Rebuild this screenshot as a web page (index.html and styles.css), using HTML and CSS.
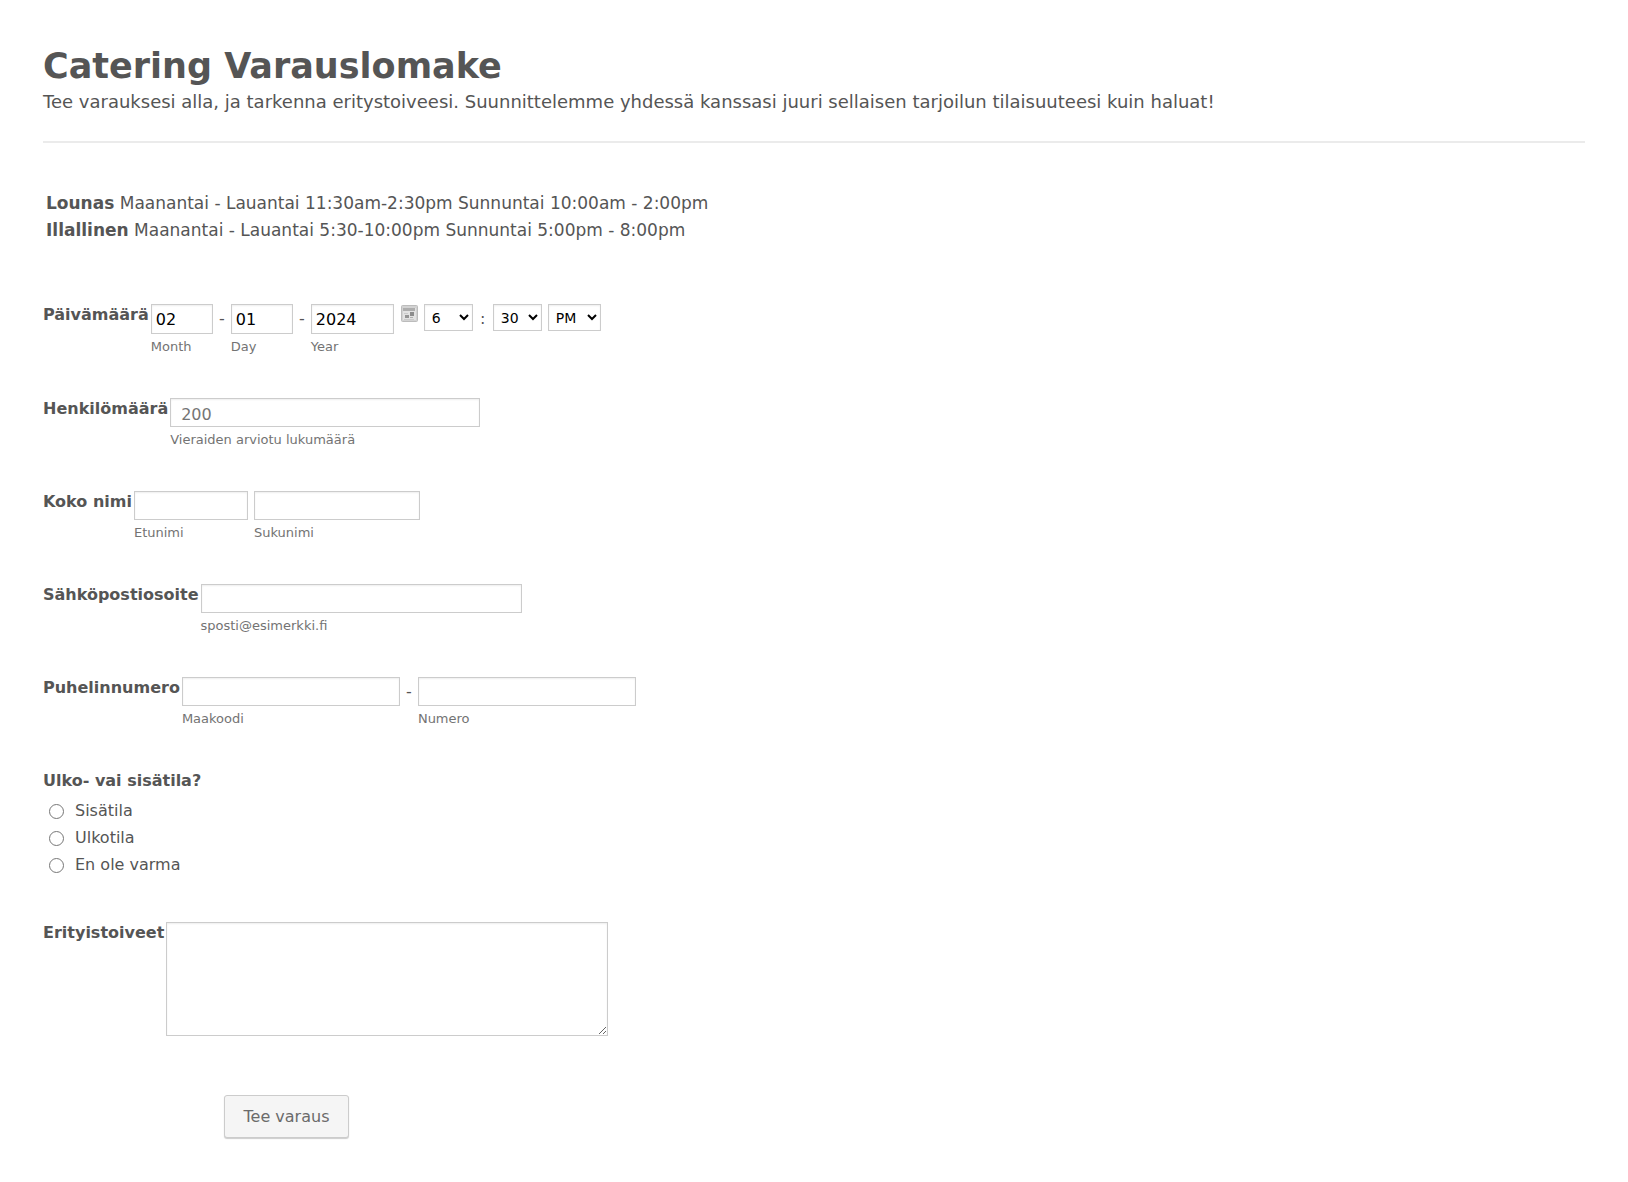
FILE: index.html
```html
<!DOCTYPE html>
<html lang="fi">
<head>
<meta charset="utf-8">
<title>Catering Varauslomake</title>
<link rel="stylesheet" href="styles.css">
</head>
<body>
<form class="form">
  <header class="header">
    <h1 class="title">Catering Varauslomake</h1>
    <p class="subtitle">Tee varauksesi alla, ja tarkenna eritystoiveesi. Suunnittelemme yhdessä kanssasi juuri sellaisen tarjoilun tilaisuuteesi kuin haluat!</p>
  </header>

  <div class="hours">
    <p><strong>Lounas</strong> Maanantai - Lauantai 11:30am-2:30pm Sunnuntai 10:00am - 2:00pm</p>
    <p><strong>Illallinen</strong> Maanantai - Lauantai 5:30-10:00pm Sunnuntai 5:00pm - 8:00pm</p>
  </div>

  <div class="row">
    <label class="label" for="month">Päivämäärä</label>
    <div class="part"><input class="box date" id="month" value="02"><label class="hint" for="month">Month</label></div>
    <span class="sep">-</span>
    <div class="part"><input class="box date" id="day" value="01"><label class="hint" for="day">Day</label></div>
    <span class="sep">-</span>
    <div class="part"><input class="box date year" id="year" value="2024"><label class="hint" for="year">Year</label></div>
    <button class="calendar" type="button" aria-label="Kalenteri">
      <svg width="17" height="17" viewBox="0 0 17 17">
        <rect x="0.5" y="0.5" width="16" height="16" rx="1" fill="#d2d2d2" stroke="#bcbcbc"/>
        <rect x="2" y="3" width="13" height="12" fill="#e2e2e2"/>
        <rect x="2" y="3" width="12" height="3" fill="#adadad"/>
        <rect x="9" y="7" width="4" height="4" fill="#8c8c8c"/>
        <rect x="4" y="10" width="4" height="3" fill="#949494"/>
        <rect x="9" y="12" width="3" height="1" fill="#b0b0b0"/>
        <path d="M3 8.500h4M3 14.500h10" stroke="#cacaca"/>
      </svg>
    </button>
    <select class="box select" aria-label="Tunti"><option>6</option></select>
    <span class="sep time-sep">:</span>
    <select class="box select" aria-label="Minuutit"><option>30</option></select>
    <select class="box select period" aria-label="AM/PM"><option>PM</option></select>
  </div>

  <div class="row">
    <label class="label" for="guests">Henkilömäärä</label>
    <div class="part"><input class="box guests" id="guests" placeholder="200"><label class="hint" for="guests">Vieraiden arviotu lukumäärä</label></div>
  </div>

  <div class="row">
    <label class="label" for="first">Koko nimi</label>
    <div class="part"><input class="box first" id="first"><label class="hint" for="first">Etunimi</label></div>
    <div class="part last-part"><input class="box last" id="last"><label class="hint" for="last">Sukunimi</label></div>
  </div>

  <div class="row">
    <label class="label" for="email">Sähköpostiosoite</label>
    <div class="part"><input class="box email" id="email" type="email"><label class="hint" for="email">sposti@esimerkki.fi</label></div>
  </div>

  <div class="row">
    <label class="label" for="code">Puhelinnumero</label>
    <div class="part"><input class="box phone" id="code" type="tel"><label class="hint" for="code">Maakoodi</label></div>
    <span class="sep">-</span>
    <div class="part"><input class="box phone" id="number" type="tel"><label class="hint" for="number">Numero</label></div>
  </div>

  <fieldset class="choices">
    <legend class="label">Ulko- vai sisätila?</legend>
    <label class="choice"><input type="radio" name="place">Sisätila</label>
    <label class="choice"><input type="radio" name="place">Ulkotila</label>
    <label class="choice"><input type="radio" name="place">En ole varma</label>
  </fieldset>

  <div class="row">
    <label class="label" for="wishes">Erityistoiveet</label>
    <textarea class="box wishes" id="wishes"></textarea>
  </div>

  <button class="submit" type="submit">Tee varaus</button>
</form>
</body>
</html>
```
FILE: styles.css
```css
* {
  box-sizing: border-box;
}

body {
  margin: 0;
  background: #fff;
  color: #555;
  font: 16px/22px Verdana, "DejaVu Sans", sans-serif;
}

.form {
  padding: 44px 43px 43px;
}

.header {
  padding-bottom: 27px;
  border-bottom: 2px solid #ebebeb;
}

.title {
  margin: 0;
  font-size: 35px;
  line-height: 44px;
}

.subtitle {
  margin: 0;
  padding-top: 2px;
  font-size: 18px;
  line-height: 24px;
}

.hours {
  padding: 47px 3px 60px;
  font-size: 17px;
  line-height: 27px;
}

.hours p {
  margin: 0;
}

.row {
  display: flex;
  align-items: flex-start;
  margin-bottom: 44px;
}

.label {
  padding: 0 2px 0 0;
  font-weight: bold;
}

.part {
  display: flex;
  flex-direction: column;
}

.box {
  height: 29px;
  margin: 0;
  padding: 3px 4px;
  border: 1px solid #ccc;
  border-radius: 0;
  outline: 0;
  background: #fff;
  box-shadow: inset 0 1px 2px #eee;
  color: #000;
  font: inherit;
}

.hint {
  margin-top: 5px;
  color: #737373;
  font-size: 13px;
  line-height: 15px;
}

.sep {
  width: 18px;
  padding-top: 4px;
  text-align: center;
}

.time-sep {
  width: 20px;
}

.date {
  width: 62px;
  height: 30px;
}

.year {
  width: 83px;
}

.calendar {
  display: flex;
  margin: 1px 6px 0 7px;
  padding: 0;
  border: 0;
  background: none;
}

.select {
  width: 49px;
  height: 27px;
  padding: 3px;
  font-size: 14px;
}

.period {
  width: 53px;
  margin-left: 6px;
}

.guests {
  width: 310px;
  padding: 5px 10px 1px;
}

.guests::placeholder {
  color: #757575;
}

.first {
  width: 114px;
}

.last-part {
  margin-left: 6px;
}

.last {
  width: 166px;
}

.email {
  width: 321px;
}

.phone {
  width: 218px;
}

.choices {
  margin: 0 0 44px;
  padding: 0;
  border: 0;
}

.choices .label {
  margin-bottom: 5px;
}

.choice {
  display: flex;
  align-items: flex-start;
  line-height: 27px;
}

.choice input {
  width: 15px;
  height: 15px;
  margin: 7px 11px 0 6px;
}

.wishes {
  width: 442px;
  height: 114px;
}

.submit {
  display: block;
  width: 125px;
  height: 43px;
  margin: 59px 0 0 181px;
  padding: 0;
  border: 1px solid #ccc;
  border-radius: 3px;
  background: #f5f5f5;
  box-shadow: 0 1px 1px #ccc;
  color: #6b6b6b;
  font: inherit;
}
```
